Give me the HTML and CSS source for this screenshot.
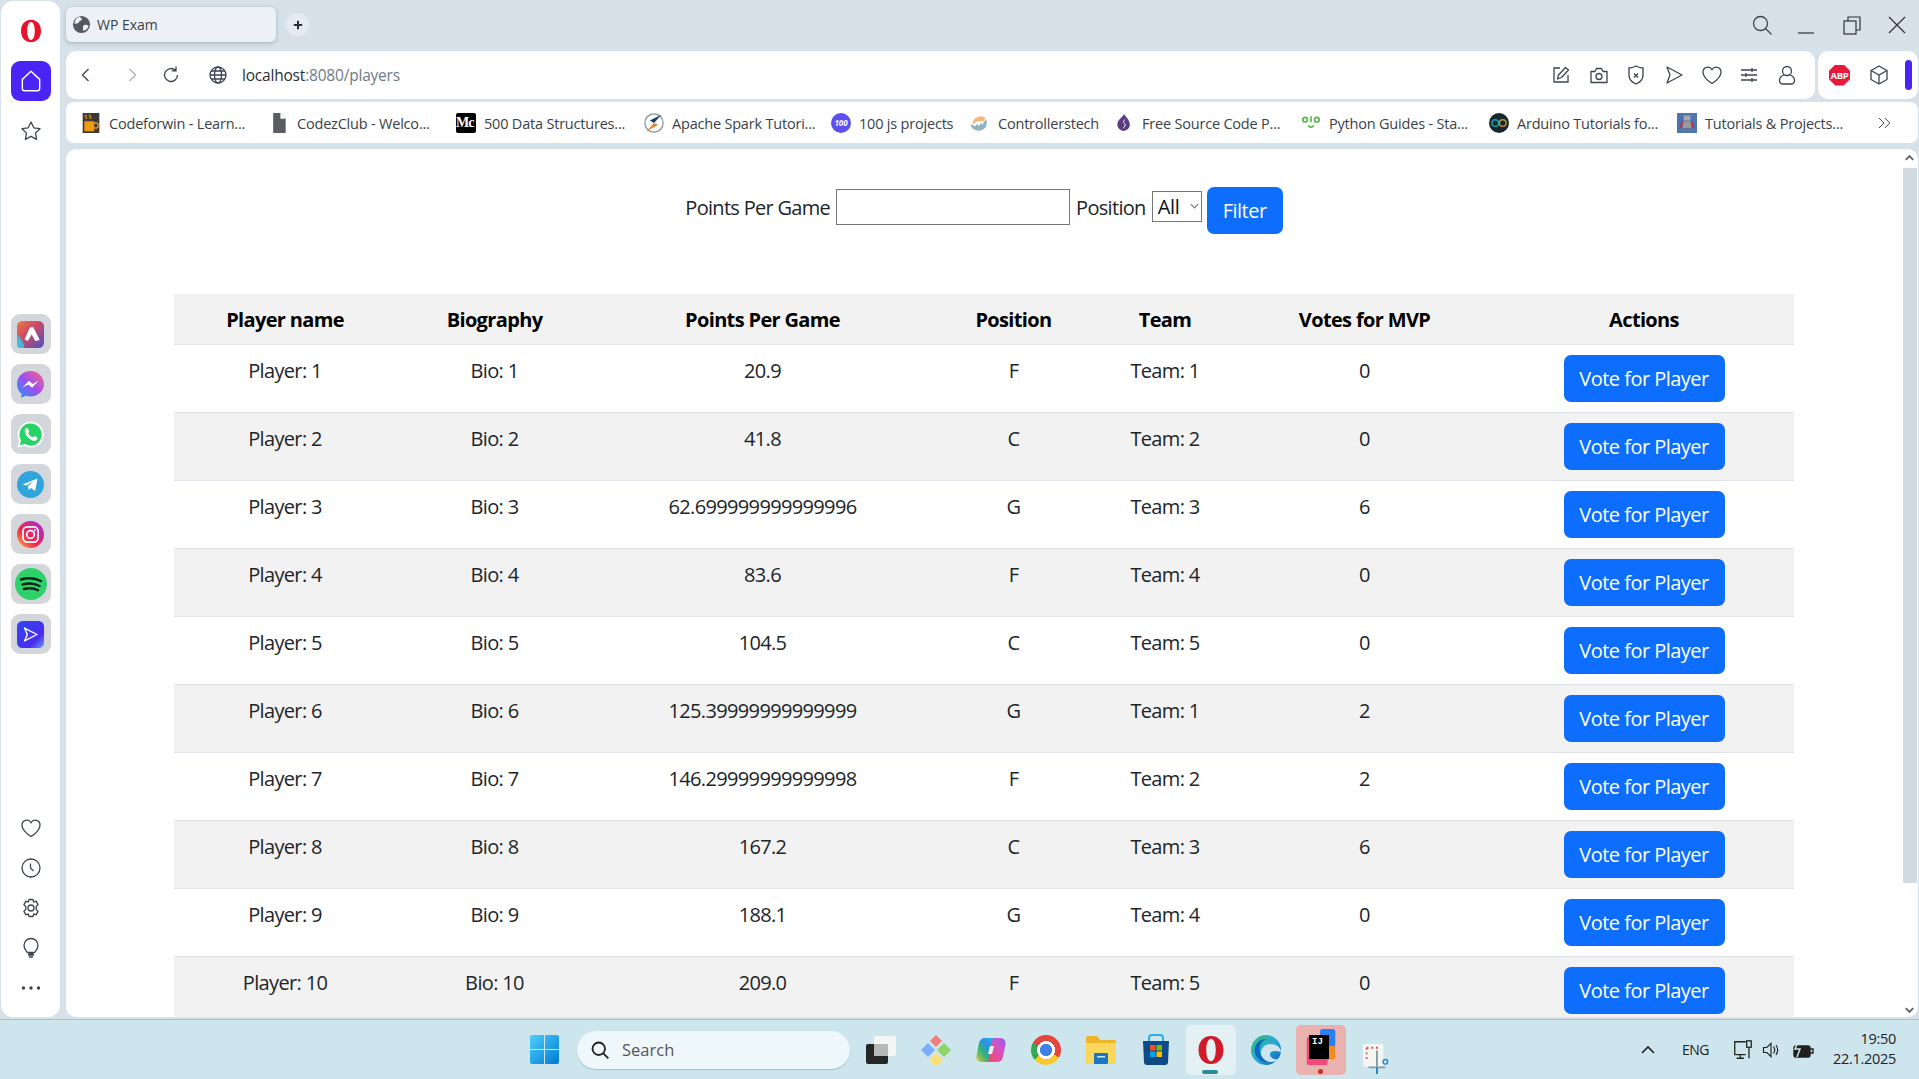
FILE: index.html
```html
<!DOCTYPE html>
<html lang="en">
<head>
<meta charset="utf-8">
<title>WP Exam</title>
<link rel="stylesheet" href="styles.css">
</head>
<body>
<div class="window">
  <aside class="sidebar">
    <svg class="opera-logo" viewBox="0 0 24 24"><path fill="#e8122d" fill-rule="evenodd" d="M12 .8C5.6.8 2 5.800 2 12s3.600 11.200 10 11.200S22 18.200 22 12 18.400.8 12 .8zm0 2.200c2.400 0 3.800 4 3.800 9s-1.400 9-3.800 9-3.800-4-3.800-9 1.400-9 3.800-9z"/></svg>
    <div class="home-btn"><svg viewBox="0 0 24 24" class="home-ic"><path d="M4 10.500 12 3l8 7.500V19a2 2 0 0 1-2 2H6a2 2 0 0 1-2-2z"/></svg></div>
    <svg class="ic star" viewBox="0 0 24 24"><path d="M12 3l2.800 5.800 6.200.9-4.500 4.400 1.100 6.300L12 17.400l-5.600 3 1.100-6.300L3 9.700l6.200-.9z" stroke-linejoin="round"/></svg>
    <div class="tiles">
      <div class="tile"><svg viewBox="0 0 25 25" class="app"><defs><linearGradient id="g1" x1="0" y1="0" x2="1" y2="1"><stop offset="0" stop-color="#f0783c"/><stop offset=".45" stop-color="#c8486a"/><stop offset="1" stop-color="#4b55c0"/></linearGradient></defs><rect width="25" height="25" rx="5" fill="url(#g1)"/><path d="M0 13q5 3 7 12H3a3 3 0 0 1-3-3z" fill="#46b8e0"/><path d="M12 6l3-.5 6 12-4 1-3.500-6-3.500 6-3-1.500z" fill="#fff"/></svg></div>
      <div class="tile"><svg viewBox="0 0 25 25" class="app"><defs><linearGradient id="g2" x1="0" y1="1" x2="1" y2="0"><stop offset="0" stop-color="#1b9bf5"/><stop offset=".5" stop-color="#a24cf0"/><stop offset="1" stop-color="#fa6a7c"/></linearGradient></defs><path d="M12.500 0C5.500 0 0 5.200 0 12c0 3.600 1.500 6.700 4 8.900V25l3.800-2.100c1.500.4 3 .6 4.700.6 7 0 12.500-5.200 12.500-11.500S19.500 0 12.500 0z" fill="url(#g2)"/><path d="M5 15.500l6-6.500 3.500 3L20 9l-6 6.500-3.500-3z" fill="#fff"/></svg></div>
      <div class="tile"><svg viewBox="0 0 25 25" class="app"><path d="M.5 24.500l1.700-6.200A12 12 0 1 1 6.800 23z" fill="#fff"/><path d="M2.500 22.500l1.300-4.600A10.300 10.300 0 1 1 7.200 21.300z" fill="#25d366"/><path d="M9 6.500c-.6 0-1.800.9-1.800 2.900 0 2 1.400 4 2 4.700.8 1 2.800 3.400 5.700 4.200 2 .5 3.300-.4 3.700-1.300.3-.8.300-1.500.2-1.700l-2.700-1.400-1.200 1.400c-1.300-.4-3.800-2.200-4.500-4l1-1.300-1.200-2.900c-.2-.5-.7-.6-1.200-.6z" fill="#fff"/></svg></div>
      <div class="tile"><svg viewBox="0 0 25 25" class="app"><circle cx="12.500" cy="12.500" r="12.500" fill="#2fa5dc"/><path d="M5 12.500l14-5.500-2.200 11.500-4-2.800-2 2-.6-3.600 5.300-4.800-6.800 4.200z" fill="#fff"/></svg></div>
      <div class="tile"><svg viewBox="0 0 25 25" class="app"><defs><linearGradient id="g5" x1="0" y1="1" x2="1" y2="0"><stop offset="0" stop-color="#fdb43c"/><stop offset=".4" stop-color="#f0284e"/><stop offset="1" stop-color="#a02ce0"/></linearGradient></defs><circle cx="12.500" cy="12.500" r="12.500" fill="url(#g5)"/><rect x="5.500" y="5.500" width="14" height="14" rx="4" fill="none" stroke="#fff" stroke-width="1.600"/><circle cx="12.500" cy="12.500" r="3.500" fill="none" stroke="#fff" stroke-width="1.600"/><circle cx="16.500" cy="8.500" r=".9" fill="#fff"/></svg></div>
      <div class="tile"><svg viewBox="0 0 32 32" class="app-lg"><circle cx="16" cy="16" r="16" fill="#2ed16a"/><path d="M6 11.500c7-2 14-1.500 20 1.500M7.500 16.500c6-1.500 12-1.200 17 1.500M9 21c5-1.200 10-1 14 1.200" fill="none" stroke="#12231a" stroke-width="2.400" stroke-linecap="round"/></svg></div>
      <div class="tile"><svg viewBox="0 0 25 25" class="app"><defs><linearGradient id="g7" x1="0" y1="0" x2="1" y2="1"><stop offset="0" stop-color="#3048f0"/><stop offset=".7" stop-color="#4a2cf0"/><stop offset="1" stop-color="#6a9af5"/></linearGradient></defs><rect width="25" height="25" rx="5" fill="url(#g7)"/><path d="M7 6.500l11.500 6-11.500 6 2.500-6z" fill="none" stroke="#fff" stroke-width="1.300" stroke-linejoin="round"/></svg></div>
    </div>
    <div class="side-bottom">
      <svg class="ic" viewBox="0 0 24 24"><path d="M12 20.500S3 15.300 3 9a4.800 4.800 0 0 1 9-2.300A4.800 4.800 0 0 1 21 9c0 6.300-9 11.500-9 11.500z"/></svg>
      <svg class="ic" viewBox="0 0 24 24"><circle cx="12" cy="12" r="9"/><path d="M11.500 7.500v4.500l3 3"/></svg>
      <svg class="ic" viewBox="0 0 24 24"><path d="M10 3.500h4l.7 2.600 2.400-.9 2 3.400-1.900 1.900v3l1.900 1.900-2 3.400-2.400-.9-.7 2.600h-4l-.7-2.600-2.400.9-2-3.400L6.800 13.500v-3L4.900 8.600l2-3.400 2.400.9z" stroke-linejoin="round"/><circle cx="12" cy="12" r="3"/></svg>
      <svg class="ic" viewBox="0 0 24 24"><path d="M8.500 16.500C7 14.500 5 13 5 9.500a7 7 0 0 1 14 0c0 3.500-2 5-3.500 7z"/><path d="M9 19h6M10 21h4M9.500 17.500h5"/></svg>
      <svg class="ic dots" viewBox="0 0 24 24"><circle cx="4.500" cy="12" r="1.700"/><circle cx="12" cy="12" r="1.700"/><circle cx="19.500" cy="12" r="1.700"/></svg>
    </div>
  </aside>

  <div class="main">
    <div class="tabstrip">
      <div class="tab">
        <svg viewBox="0 0 20 20" class="tab-fav"><circle cx="10" cy="10" r="9" fill="#55595f"/><path d="M8 1.800c1 1.200 2.600 1.500 2.400 3-.3 1.500-3 1.200-3.200 2.800-.2 1.600-3 1-4.300 1.800C2.500 6 4.500 2.800 8 1.800zM13 10.500c1.500-.5 3.500.3 4.600 1-.7 2.500-3 4.800-6 5.200-.6-1.500.5-2.500 0-3.700-.3-1 .2-2 1.400-2.500z" fill="#edf1f6"/></svg>
        <span class="tab-title">WP Exam</span>
      </div>
      <div class="newtab"><svg viewBox="0 0 12 12" class="plus"><path d="M6 1v10M1 6h10"/></svg></div>
      <div class="winctl">
        <svg class="ic" viewBox="0 0 24 24"><circle cx="10.500" cy="10.500" r="7"/><path d="M15.500 15.500l6 6"/></svg>
        <svg class="ic thin" viewBox="0 0 24 24"><path d="M3 20h16"/></svg>
        <svg class="ic thin" viewBox="0 0 24 24"><rect x="4" y="8" width="12" height="13"/><path d="M8 8V4h12v13h-4"/></svg>
        <svg class="ic thin" viewBox="0 0 24 24"><path d="M4 4l16 16M20 4L4 20"/></svg>
      </div>
    </div>

    <div class="toolbar">
      <div class="addressbar">
        <svg class="ic nav-back" viewBox="0 0 24 24"><path d="M14.500 6l-6 6 6 6"/></svg>
        <svg class="ic nav-fwd" viewBox="0 0 24 24"><path d="M9.500 6l6 6-6 6"/></svg>
        <svg class="ic nav-reload" viewBox="0 0 24 24"><path d="M18.500 12a6.500 6.500 0 1 1-2-4.700M17 3.500v4.300h-4.300"/></svg>
        <svg class="ic nav-globe" viewBox="0 0 24 24"><circle cx="12" cy="12" r="8"/><ellipse cx="12" cy="12" rx="3.500" ry="8"/><path d="M4 12h16M5 8h14M5 16h14"/></svg>
        <span class="url">localhost<span class="url-rest">:8080/players</span></span>
        <div class="page-actions">
          <svg class="ic" viewBox="0 0 24 24"><path d="M11 5H5v14h14v-7"/><path d="M8.500 16l1-4 7-7.500 3 2.500-7 7.500z" stroke-linejoin="round"/></svg>
          <svg class="ic" viewBox="0 0 24 24"><path d="M4 8.500h4l1.500-3h5l1.500 3h4v11H4z" stroke-linejoin="round"/><circle cx="12" cy="13.500" r="3"/></svg>
          <svg class="ic" viewBox="0 0 24 24"><path d="M12 3c2.500 1.500 5 2 7 2v7c0 5-3.500 7.500-7 9-3.500-1.500-7-4-7-9V5c2 0 4.500-.5 7-2z"/><path d="M10 10.500l4 4M14 10.500l-4 4"/></svg>
          <svg class="ic" viewBox="0 0 24 24"><path d="M5 4l15 8-15 8 3-8z" stroke-linejoin="round"/></svg>
          <svg class="ic" viewBox="0 0 24 24"><path d="M12 20.500S3 15.300 3 9a4.800 4.800 0 0 1 9-2.300A4.800 4.800 0 0 1 21 9c0 6.300-9 11.500-9 11.500z"/></svg>
          <svg class="ic" viewBox="0 0 24 24"><path d="M4 7h16M4 12h16M4 17h16M15 5v4M9 10v4M15 15v4"/></svg>
          <svg class="ic" viewBox="0 0 24 24"><circle cx="12" cy="8" r="4.500"/><path d="M9 12c-3 1-4.500 3-4.500 5.500C4.500 19.500 6 21 8 21h8c2 0 3.500-1.500 3.500-3.500C19.500 15 18 13 15 12"/></svg>
        </div>
      </div>
      <div class="extbox">
        <div class="abp">ABP</div>
        <svg class="ic" viewBox="0 0 24 24"><path d="M12 3l8 4.500v9L12 21l-8-4.500v-9z" stroke-linejoin="round"/><path d="M4 7.500l8 4.500 8-4.500M12 12v9"/></svg>
        <div class="purple-bar"></div>
      </div>
    </div>

    <div class="bookmarks">
      <div class="bm"><svg viewBox="0 0 20 24" class="fav"><rect width="20" height="24" fill="#3a3a38"/><rect x="2" y="10" width="12" height="12" rx="1" fill="#f09a10"/><path d="M14 12h2.500a2 2 0 0 1 2 2v2a2 2 0 0 1-2 2H14" fill="none" stroke="#f09a10" stroke-width="1.600"/><path d="M5 2.500H3v2h2v2H3M10 2.500H8v2h2v2H8" fill="none" stroke="#f09a10"/></svg><span>Codeforwin - Learn...</span></div>
      <div class="bm"><svg viewBox="0 0 20 24" class="fav"><path d="M3 0h9l6 6.500V24H3z" fill="#5a5c60"/><path d="M12 0v6.500h6" fill="#fff" stroke="#fff" stroke-width=".6"/></svg><span>CodezClub - Welco...</span></div>
      <div class="bm"><div class="fav medium">Mc</div><span>500 Data Structures...</span></div>
      <div class="bm"><svg viewBox="0 0 24 24" class="fav"><circle cx="12" cy="12" r="11" fill="#fff" stroke="#7e8c98" stroke-width="1.400"/><path d="M21 2L7 9l5 3z" fill="#123f6d"/><path d="M3 22l14-8-5-2z" fill="#f47b20"/></svg><span>Apache Spark Tutori...</span></div>
      <div class="bm"><div class="fav hundred">100</div><span>100 js projects</span></div>
      <div class="bm"><svg viewBox="0 0 24 24" class="fav"><path d="M3 14a10 10 0 0 1 16-8l-3 4c-4-1-9 0-13 4z" fill="#f6b77a"/><path d="M2.500 14l4 2 2-3 2 3 2.500-4 2 2 2-4 2.500-2a10.500 10.500 0 0 1-4 12 10.500 10.500 0 0 1-15-6z" fill="#8fb3c4"/></svg><span>Controllerstech</span></div>
      <div class="bm"><svg viewBox="0 0 24 24" class="fav"><path d="M12 1c1 3 7 7 7 13a7.500 7.500 0 0 1-15 0C4 8 11 5 12 1z" fill="#5a3d80"/><path d="M13 8c-3 2-1 4 0 5s0 4-2 5" fill="none" stroke="#fff" stroke-width="1.200"/></svg><span>Free Source Code P...</span></div>
      <div class="bm"><svg viewBox="0 0 24 24" class="fav"><g fill="none" stroke="#57b947" stroke-width="2"><circle cx="5" cy="8" r="2.800"/><path d="M12 4v7"/><circle cx="19" cy="8" r="2.800"/><path d="M8.500 15q3.500 4 7 0"/></g></svg><span>Python Guides - Sta...</span></div>
      <div class="bm"><svg viewBox="0 0 24 24" class="fav"><circle cx="12" cy="12" r="12" fill="#15282f"/><circle cx="7.500" cy="12" r="4" fill="none" stroke="#14a0a8" stroke-width="1.800"/><circle cx="16.500" cy="12" r="4" fill="none" stroke="#c89030" stroke-width="1.800"/></svg><span>Arduino Tutorials fo...</span></div>
      <div class="bm"><svg viewBox="0 0 24 24" class="fav"><rect width="24" height="24" fill="#4e74b4"/><rect x="8" y="3" width="8" height="6" fill="#a8a8a8"/><rect x="7" y="10" width="10" height="8" fill="#9a9a9a"/><path d="M7 10l-3 8M17 10l3 8" stroke="#c03030" stroke-width="2"/><path d="M9 18v4M15 18v4" stroke="#777" stroke-width="2"/></svg><span>Tutorials &amp; Projects...</span></div>
      <svg class="ic more" viewBox="0 0 24 24"><path d="M6 6l6 6-6 6M13 6l6 6-6 6"/></svg>
    </div>

    <div class="content">
      <div class="page">
        <form class="filter">
          <label class="filter-label">Points Per Game</label>
          <input class="filter-input" type="text">
          <label class="filter-label">Position</label>
          <select class="filter-select"><option>All</option></select>
          <button class="btn filter-btn" type="button">Filter</button>
        </form>
        <table class="players">
          <colgroup><col class="c1"><col class="c2"><col class="c3"><col class="c4"><col class="c5"><col class="c6"><col class="c7"></colgroup>
          <thead><tr><th>Player name</th><th>Biography</th><th>Points Per Game</th><th>Position</th><th>Team</th><th>Votes for MVP</th><th>Actions</th></tr></thead>
          <tbody>
            <tr><td>Player: 1</td><td>Bio: 1</td><td>20.9</td><td>F</td><td>Team: 1</td><td>0</td><td><button class="btn" type="button">Vote for Player</button></td></tr>
            <tr><td>Player: 2</td><td>Bio: 2</td><td>41.8</td><td>C</td><td>Team: 2</td><td>0</td><td><button class="btn" type="button">Vote for Player</button></td></tr>
            <tr><td>Player: 3</td><td>Bio: 3</td><td>62.699999999999996</td><td>G</td><td>Team: 3</td><td>6</td><td><button class="btn" type="button">Vote for Player</button></td></tr>
            <tr><td>Player: 4</td><td>Bio: 4</td><td>83.6</td><td>F</td><td>Team: 4</td><td>0</td><td><button class="btn" type="button">Vote for Player</button></td></tr>
            <tr><td>Player: 5</td><td>Bio: 5</td><td>104.5</td><td>C</td><td>Team: 5</td><td>0</td><td><button class="btn" type="button">Vote for Player</button></td></tr>
            <tr><td>Player: 6</td><td>Bio: 6</td><td>125.39999999999999</td><td>G</td><td>Team: 1</td><td>2</td><td><button class="btn" type="button">Vote for Player</button></td></tr>
            <tr><td>Player: 7</td><td>Bio: 7</td><td>146.29999999999998</td><td>F</td><td>Team: 2</td><td>2</td><td><button class="btn" type="button">Vote for Player</button></td></tr>
            <tr><td>Player: 8</td><td>Bio: 8</td><td>167.2</td><td>C</td><td>Team: 3</td><td>6</td><td><button class="btn" type="button">Vote for Player</button></td></tr>
            <tr><td>Player: 9</td><td>Bio: 9</td><td>188.1</td><td>G</td><td>Team: 4</td><td>0</td><td><button class="btn" type="button">Vote for Player</button></td></tr>
            <tr><td>Player: 10</td><td>Bio: 10</td><td>209.0</td><td>F</td><td>Team: 5</td><td>0</td><td><button class="btn" type="button">Vote for Player</button></td></tr>
          </tbody>
        </table>
      </div>
      <div class="scrollbar">
        <svg viewBox="0 0 12 8" class="sb-arrow"><path d="M2 6l4-4 4 4"/></svg>
        <div class="sb-thumb"></div>
        <svg viewBox="0 0 12 8" class="sb-arrow"><path d="M2 2l4 4 4-4"/></svg>
      </div>
    </div>
  </div>
</div>

<footer class="taskbar">
  <svg viewBox="0 0 29 29" class="start"><defs><linearGradient id="w1" x1="0" y1="0" x2="1" y2="1"><stop offset="0" stop-color="#4fd0fb"/><stop offset="1" stop-color="#0078d4"/></linearGradient></defs><path fill="url(#w1)" d="M0 2a2 2 0 0 1 2-2h12v14H0zM15 0h12a2 2 0 0 1 2 2v12H15zM0 15h14v14H2a2 2 0 0 1-2-2zM15 15h14v12a2 2 0 0 1-2 2H15z"/></svg>
  <div class="search">
    <svg viewBox="0 0 24 24" class="search-ic"><circle cx="10.500" cy="10.500" r="7.500"/><path d="M16 16l6 6"/></svg>
    <span>Search</span>
  </div>
  <div class="apps">
    <div class="task"><svg viewBox="0 0 30 28" class="t30"><rect y="8" width="22" height="20" rx="2" fill="#262626"/><rect x="8" width="22" height="20" rx="2" fill="#f4f6f6"/><rect x="8" y="8" width="14" height="12" fill="#b8b8b8"/></svg></div>
    <div class="task"><svg viewBox="0 0 30 30" class="t30"><path d="M15 0l6 6-6 6-6-6z" fill="#f47c7c"/><path d="M7 8l7 7-7 7-7-7z" fill="#7aaefc"/><path d="M23 8l7 7-7 7-7-7z" fill="#8ed46a"/><path d="M15 18l7 7-5 5h-4l-5-5z" fill="#fbdf78"/></svg></div>
    <div class="task"><svg viewBox="0 0 30 26" class="t30"><defs><linearGradient id="c1" x1="0" y1="1" x2="1" y2="0"><stop offset="0" stop-color="#f5c33c"/><stop offset=".35" stop-color="#38b76e"/><stop offset=".65" stop-color="#2a8fe8"/><stop offset="1" stop-color="#2ab6ea"/></linearGradient><linearGradient id="c2" x1="0" y1="1" x2="1" y2="0"><stop offset="0" stop-color="#f04e5e"/><stop offset=".6" stop-color="#d850c8"/><stop offset="1" stop-color="#8c5ef0"/></linearGradient></defs><path d="M9 1h9l-5 24H6C2 25 0 22 .5 19L3 6c.5-3 3-5 6-5z" fill="url(#c1)"/><path d="M21 25h-9l5-24h7c4 0 6 3 5.500 6L27 20c-.5 3-3 5-6 5z" fill="url(#c2)"/><path d="M14 9h4l-2 8h-4z" fill="#eef4f4"/></svg></div>
    <div class="task"><div class="chrome"></div></div>
    <div class="task"><svg viewBox="0 0 30 30" class="t30"><path d="M0 3a2 2 0 0 1 2-2h9l3 4h14a2 2 0 0 1 2 2v21H0z" fill="#f0b429"/><path d="M0 8h30v20a1 1 0 0 1-1 1H1a1 1 0 0 1-1-1z" fill="#fbd75b"/><rect x="8" y="18" width="14" height="11" rx="1" fill="#1a78c2"/><rect x="11" y="21" width="8" height="1.500" fill="#cde6ed"/></svg></div>
    <div class="task"><svg viewBox="0 0 28 32" class="t28"><path d="M7 7V4a3 3 0 0 1 3-3h8a3 3 0 0 1 3 3v3" fill="none" stroke="#27b0e8" stroke-width="2"/><path d="M1 7h26l-1 21a3 3 0 0 1-3 3H5a3 3 0 0 1-3-3z" fill="#0e4a86"/><rect x="8" y="11" width="5.500" height="5.500" fill="#f25022"/><rect x="14.500" y="11" width="5.500" height="5.500" fill="#7fba00"/><rect x="8" y="17.500" width="5.500" height="5.500" fill="#00a4ef"/><rect x="14.500" y="17.500" width="5.500" height="5.500" fill="#ffb900"/></svg></div>
    <div class="task task-opera"><svg viewBox="0 0 24 24" class="t30"><path fill="#d11a2a" fill-rule="evenodd" d="M12 .8C5.600.8 2 5.800 2 12s3.600 11.200 10 11.200S22 18.200 22 12 18.400.8 12 .8zm0 2.200c2.400 0 3.800 4 3.800 9s-1.400 9-3.800 9-3.800-4-3.800-9 1.400-9 3.800-9z"/></svg><span class="ind-teal"></span></div>
    <div class="task"><svg viewBox="0 0 30 30" class="t30"><defs><linearGradient id="e1" x1="0" y1="0" x2="1" y2="1"><stop offset="0" stop-color="#3ac06e"/><stop offset=".5" stop-color="#28a8d8"/><stop offset="1" stop-color="#0b5fb8"/></linearGradient></defs><circle cx="15" cy="15" r="15" fill="url(#e1)"/><path d="M30 17c0-4-4-8-10-8-7 0-10 5-10 9 0 5 4 9 10 9 3 0 6-1 8-3-5 1-9-1-9-5 0-2 2-3 5-3 3 0 5 1 6 1z" fill="#cde6ed"/><path d="M4 12C6 7 10 4 15 4c-4 2-8 7-6 14 1 4 4 7 8 9-8 1-15-6-13-15z" fill="#0d67c0"/></svg></div>
    <div class="task task-ij"><svg viewBox="0 0 30 40" class="ij-bg"><rect x="0" y="8" width="22" height="30" rx="3" fill="#f5487a"/><rect x="14" y="0" width="16" height="20" rx="3" fill="#2a7ff5"/><rect x="18" y="18" width="12" height="14" rx="2" fill="#f58a20"/></svg><span class="ij-box">IJ</span><span class="ind-red"></span></div>
    <div class="task"><svg viewBox="0 0 30 34" class="snip"><rect x="1" y="1" width="22" height="24" rx="2" fill="#f4f5f5"/><path d="M5 5h2M10 5h2M15 5h2M5 5v2M5 10v2M5 15v2" stroke="#e0533c" stroke-width="2"/><path d="M16 8v24M7 26h18" stroke="#8a9aa0" stroke-width="2"/><circle cx="25" cy="20" r="2.500" fill="none" stroke="#1e88d0" stroke-width="1.500"/><path d="M16 26v7" stroke="#1e88d0" stroke-width="2"/></svg></div>
  </div>
  <div class="tray">
    <svg class="tray-ic caret" viewBox="0 0 16 16"><path d="M2 11l6-6 6 6"/></svg>
    <span class="lang">ENG</span>
    <svg class="tray-ic mon" viewBox="0 0 24 24"><path d="M15 3H3v14h12M9 17v4M5 21h8"/><rect x="16" y="2" width="5" height="7"/><path d="M18.500 9v12"/></svg>
    <svg class="tray-ic vol" viewBox="0 0 24 24"><path d="M3 9h4l5-5v16l-5-5H3z"/><path d="M15 8q3 4 0 8M18 6q4 6 0 12"/></svg>
    <svg class="tray-ic batt" viewBox="0 0 24 24"><rect x="4" y="8" width="16" height="11" rx="2" fill="#1f1f1f"/><path d="M20 11h3v4h-3" /><path d="M9 2L5 11h5l-3 8" stroke="#cde6ed" stroke-width="1.500"/></svg>
    <div class="clock"><span>19:50</span><span>22.1.2025</span></div>
  </div>
</footer>
</body>
</html>
```
FILE: styles.css
```css
* { box-sizing: border-box; }
html, body { margin: 0; padding: 0; }
body {
  width: 1919px; height: 1079px; overflow: hidden;
  display: flex; flex-direction: column;
  font-family: "Open Sans", "Noto Sans", sans-serif;
  color: #212529; background: #d7e1ea;
}
svg { display: block; flex: none; }
.ic { width: 24px; height: 24px; fill: none; stroke: #3c4450; stroke-width: 1.300; }
.ic.thin { stroke-width: 1.200; stroke: #333; }
.dots { fill: #3c4450; stroke: none; }

.window { height: 1020px; display: flex; background: #d7e1ea; padding: 1px 1px 2px 1px; border-bottom: 1px solid #a9bfc8; }

.sidebar {
  width: 59px; background: #fff; border-radius: 12px;
  display: flex; flex-direction: column; align-items: center; padding: 18px 0 17px;
  margin-right: 6px;
}
.opera-logo { width: 24px; height: 24px; }
.home-btn { width: 40px; height: 40px; margin-top: 18px; border-radius: 9px; background: #4a23f5; display: flex; align-items: center; justify-content: center; }
.home-ic { width: 26px; height: 26px; fill: none; stroke: #fff; stroke-width: 1.300; stroke-linejoin: round; }
.star { margin-top: 18px; }
.tiles { margin-top: 171px; display: flex; flex-direction: column; gap: 10px; }
.tile { width: 40px; height: 40px; border-radius: 9px; background: #d3d7dc; display: flex; align-items: center; justify-content: center; }
.app { width: 27px; height: 27px; }
.app-lg { width: 32px; height: 32px; }
.side-bottom { margin-top: auto; display: flex; flex-direction: column; gap: 16px; }

.main { flex: 1; min-width: 0; display: flex; flex-direction: column; }
.tabstrip { height: 50px; display: flex; align-items: flex-start; padding-top: 6px; }
.tab { width: 210px; height: 35px; background: #edf1f6; border-radius: 6px; box-shadow: 0 1px 4px rgba(60,80,100,.35); display: flex; align-items: center; padding-left: 6px; gap: 6px; font-size: 14px; color: #3a3f47; }
.tab-fav { width: 19px; height: 19px; }
.newtab { width: 23px; height: 23px; border-radius: 50%; background: #e4ebf2; margin: 6px 0 0 10px; display: flex; align-items: center; justify-content: center; }
.plus { width: 10px; height: 10px; stroke: #2a2f36; stroke-width: 2.400; fill: none; }
.winctl { margin-left: auto; display: flex; gap: 21px; padding: 0 9px 0 0; margin-top: 6px; }

.toolbar { height: 48px; display: flex; gap: 3px; }
.addressbar { flex: 1; background: #fff; border-radius: 10px; display: flex; align-items: center; padding-left: 8px; padding-right: 16px; }
.nav-fwd { margin-left: 22px; stroke: #aab1ba; }
.nav-reload { margin-left: 15px; }
.nav-globe { margin-left: 23px; }
.url { margin-left: 12px; font-size: 15.500px; letter-spacing: -.2px; color: #2a2f36; }
.url-rest { color: #6d7a8a; }
.page-actions { margin-left: auto; display: flex; gap: 13.700px; }
.extbox { width: 100px; background: #fff; border-radius: 10px; display: flex; align-items: center; padding-left: 12px; position: relative; }
.abp { width: 21px; height: 21px; margin-left: -1px; background: #e8193c; color: #fff; font-size: 9.500px; letter-spacing: -.3px; font-weight: 700; display: flex; align-items: center; justify-content: center; clip-path: polygon(30% 0,70% 0,100% 30%,100% 70%,70% 100%,30% 100%,0 70%,0 30%); }
.extbox .ic { margin-left: 17px; }
.purple-bar { width: 7px; height: 30px; border-radius: 4px; background: #4a23f5; margin-left: 14px; }

.bookmarks { height: 41px; margin-top: 3px; background: #fff; border-radius: 8px; display: grid; grid-template-columns: 188px 187px 188px 187px 139px 144px 187px 188px 188px 197px 30px; align-items: center; padding-left: 15px; }
.bm { display: flex; align-items: center; gap: 8px; font-size: 14.500px; letter-spacing: -.2px; color: #3a3f47; white-space: nowrap; }
.bm span { padding-top: 1px; }
.fav { width: 20px; height: 20px; }
.medium { background: #000; color: #fff; font: 700 14px/20px "Liberation Serif", serif; overflow: hidden; letter-spacing: -1px; border-radius: 2px; }
.hundred { background: #5b4ff0; border-radius: 50%; color: #fff; font: italic 700 8px/20px "Open Sans", sans-serif; text-align: center; letter-spacing: 0; }
.more { width: 20px; height: 20px; stroke-width: 1.200; }

.content { flex: 1; min-height: 0; margin-top: 6px; background: #fff; border-radius: 10px; overflow: hidden; display: flex; }
.page { flex: 1; min-width: 0; }
.filter { display: flex; justify-content: center; align-items: flex-start; padding-top: 38px; margin-bottom: 60px; box-sizing: content-box; height: 47px; font-size: 20px; }
.filter-label { font-size: 20px; letter-spacing: -.7px; line-height: 28px; margin-top: 7px; }
.filter-input { width: 234px; height: 36px; margin: 2px 6px 0; border: 1px solid #767676; background: #fff; border-radius: 0; padding: 0; }
.filter-select { appearance: none; width: 50px; height: 31px; margin: 4px 5px 0 6px; border: 1px solid #767676; border-radius: 0; font: 20px "Open Sans", sans-serif; letter-spacing: -.3px; color: #111; padding: 0 0 0 5px; background: #fff url("data:image/svg+xml,%3Csvg xmlns='http://www.w3.org/2000/svg' viewBox='0 0 10 6'%3E%3Cpath d='M1 1l4 4 4-4' fill='none' stroke='%23777' stroke-width='1.300'/%3E%3C/svg%3E") no-repeat 37px 11px / 9px 6px; }
.btn { display: block; height: 47px; background: #0d6efd; color: #fff; border: 0; border-radius: 7px; font: 20px/30px "Open Sans", sans-serif; letter-spacing: -.52px; padding: 0; width: 161px; margin: 0 auto; }
.filter-btn { width: 76px; margin: 0; }

.players { width: 1620px; margin: 0 auto; border-collapse: collapse; table-layout: fixed; font-size: 20px; letter-spacing: -.65px; }
.c1 { width: 222px; } .c2 { width: 197px; } .c3 { width: 339px; } .c4 { width: 163px; } .c5 { width: 140px; } .c6 { width: 259px; } .c7 { width: 300px; }
.players th, .players td { padding: 10px; line-height: 32px; text-align: center; vertical-align: top; border-bottom: 1px solid #dee2e6; }
.players th { font-weight: 700; color: #000; background: #f2f2f2; padding-bottom: 8px; }
.players tbody tr:nth-child(even) td { background: #f2f2f2; }
.players td { height: 68px; }

.scrollbar { width: 16px; display: flex; flex-direction: column; align-items: center; padding: 5px 1px 3px 0; }
.sb-arrow { width: 11px; height: 8px; fill: none; stroke: #606060; stroke-width: 2; }
.sb-thumb { width: 14px; flex: 1; background: #d0dae3; margin: 6px 0 123px; }

.taskbar { flex: 1; background: #cde6ed; display: flex; align-items: center; padding-left: 530px; padding-right: 23px; }
.start { width: 29px; height: 29px; }
.search { width: 273px; height: 38px; margin-left: 18px; background: #eef7fa; border-radius: 19px; box-shadow: 0 1px 1px rgba(80,120,140,.35); display: flex; align-items: center; padding-left: 13px; gap: 12px; font-size: 16.500px; color: #555; }
.search-ic { width: 20px; height: 20px; fill: none; stroke: #222; stroke-width: 2.200; }
.apps { display: flex; gap: 5px; margin-left: 6px; }
.task { width: 50px; height: 50px; border-radius: 5px; display: flex; align-items: center; justify-content: center; position: relative; }
.t30 { width: 30px; height: 30px; }
.t28 { width: 28px; height: 32px; }
.chrome { width: 30px; height: 30px; border-radius: 50%; background: radial-gradient(circle, #3f7fe8 0 28%, #fff 29% 42%, transparent 43%), conic-gradient(#e8453c 0 120deg, #f8c92c 120deg 230deg, #34a853 230deg 300deg, #e8453c 300deg); }
.task-opera { background: #e4f1f4; }
.ind-teal { position: absolute; left: 16px; bottom: 1px; width: 16px; height: 4px; border-radius: 2px; background: #2c8a9a; }
.task-ij { background: #e9b2ae; }
.ij-bg { width: 30px; height: 38px; margin-bottom: 4px; }
.ij-box { position: absolute; left: 13px; top: 10px; width: 20px; height: 24px; background: #000; color: #fff; font: 700 9px/14px "Liberation Mono", monospace; padding-left: 3px; }
.ind-red { position: absolute; left: 22px; bottom: 1px; width: 5px; height: 5px; border-radius: 50%; background: #c8301e; }
.snip { width: 28px; height: 32px; margin-top: 18px; }

.tray { margin-left: auto; display: flex; align-items: center; font-size: 14px; color: #222; }
.tray-ic { fill: none; stroke: #222; stroke-width: 1.400; width: 20px; height: 20px; }
.caret { width: 16px; height: 16px; stroke-width: 1.600; }
.lang { margin-left: 26px; letter-spacing: -.5px; width: 28px; }
.mon { margin-left: 22px; width: 22px; height: 24px; }
.vol { margin-left: 7px; }
.batt { margin-left: 9px; width: 24px; height: 24px; }
.clock { margin-left: 19px; margin-top: -2px; display: flex; flex-direction: column; align-items: flex-end; font-size: 14.500px; letter-spacing: -.3px; line-height: 20px; }
```
